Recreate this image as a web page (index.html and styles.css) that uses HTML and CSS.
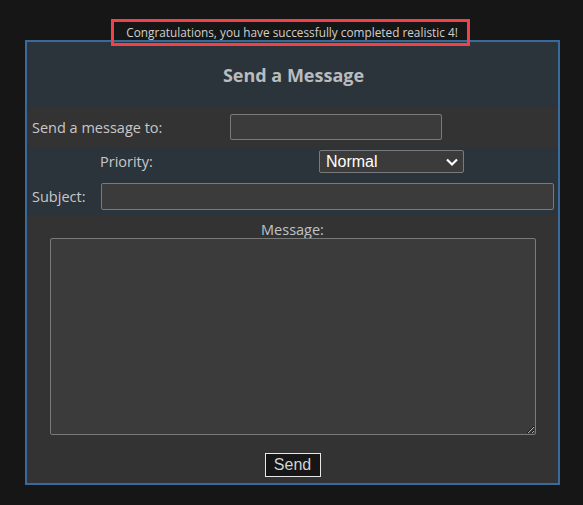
FILE: index.html
```html
<!DOCTYPE html>
<html>
<head>
<meta charset="utf-8">
<link rel="stylesheet" href="styles.css">
</head>
<body>
<div class="page">
  <div class="banner">Congratulations, you have successfully completed realistic 4!</div>
  <form class="panel">
    <div class="header">Send a Message</div>
    <div class="row-to">
      <label class="lbl-to">Send a message to:</label>
      <input class="in-to" type="text">
    </div>
    <div class="block">
      <div class="row-pri">
        <label class="lbl-pri">Priority:</label>
        <div class="select">
          <span>Normal</span>
          <svg width="14" height="10" viewBox="0 0 14 10"><path d="M2 2.5 L7 7.5 L12 2.5" fill="none" stroke="#fff" stroke-width="2.2"/></svg>
        </div>
      </div>
      <div class="row-sub">
        <label class="lbl-sub">Subject:</label>
        <input class="in-sub" type="text">
      </div>
    </div>
    <div class="msg">
      <div class="lbl-msg">Message:</div>
      <textarea class="ta"></textarea>
      <button class="send" type="button">Send</button>
    </div>
  </form>
</div>
</body>
</html>
```
FILE: styles.css
```css
html, body {
  margin: 0;
  padding: 0;
  background: #161616;
}
.page {
  position: relative;
  width: 583px;
  height: 505px;
  padding-top: 40px;
  box-sizing: border-box;
  font-family: "Open Sans", "Liberation Sans", sans-serif;
}
.banner {
  position: absolute;
  left: 111px;
  top: 19px;
  width: 359px;
  height: 27px;
  box-sizing: border-box;
  border: 3px solid #f0424a;
  color: #d0d0d0;
  font-size: 11.8px;
  line-height: 21px;
  text-align: center;
  padding-left: 3px;
  z-index: 2;
}
.panel {
  margin: 0 0 0 25px;
  width: 535px;
  box-sizing: border-box;
  border: 2px solid #3a699b;
  background: #333333;
}
.header {
  height: 65px;
  background: #2b343b;
  color: #b9bcbf;
  font-weight: bold;
  font-size: 18px;
  display: flex;
  align-items: center;
  justify-content: center;
  padding-top: 0;
  padding-left: 2px;
  box-sizing: border-box;
}
.row-to {
  height: 40px;
  display: flex;
  align-items: center;
  background: #333333;
}
label, .lbl-msg {
  color: #c8c8c8;
  font-size: 14.5px;
}
.lbl-to {
  margin-left: 5px;
  width: 198px;
}
input, textarea {
  background: #3b3b3b;
  border: 1px solid #7a7a7a;
  border-radius: 2px;
  box-sizing: border-box;
  padding: 0;
  margin: 0;
  display: block;
}
.in-to {
  width: 212px;
  height: 26px;
}
.block {
  background: #2b343b;
  height: 68px;
  padding-top: 3px;
  box-sizing: border-box;
}
.row-pri {
  display: flex;
  align-items: center;
  height: 23px;
}
.lbl-pri {
  margin-left: 73px;
  width: 219px;
}
.select {
  width: 145px;
  height: 23px;
  box-sizing: border-box;
  border: 1px solid #7a7a7a;
  border-radius: 2px;
  background: #3b3b3b;
  display: flex;
  align-items: center;
  justify-content: space-between;
  padding: 0 4px 0 6px;
  color: #ffffff;
  font-family: "Liberation Sans", Arial, sans-serif;
  font-size: 16px;
}
.select svg {
  display: block;
}
.row-sub {
  display: flex;
  align-items: center;
  margin-top: 10px;
  height: 27px;
}
.lbl-sub {
  margin-left: 5px;
  width: 69px;
}
.in-sub {
  width: 453px;
  height: 27px;
}
.msg {
  display: flex;
  flex-direction: column;
  align-items: center;
  padding-top: 5px;
  padding-bottom: 6px;
}
.lbl-msg {
  line-height: 19px;
  height: 18px;
  color: #bfc3c7;
}
.ta {
  width: 486px;
  height: 197px;
  resize: both;
  align-self: flex-start;
  margin-left: 23px;
}
.send {
  margin-top: 18px;
  width: 56px;
  height: 24px;
  box-sizing: border-box;
  background: #161616;
  border: 1px solid #e8e8e8;
  border-radius: 0;
  color: #cfd3d6;
  font-family: "Liberation Sans", Arial, sans-serif;
  font-size: 16px;
  padding: 0;
}
```
